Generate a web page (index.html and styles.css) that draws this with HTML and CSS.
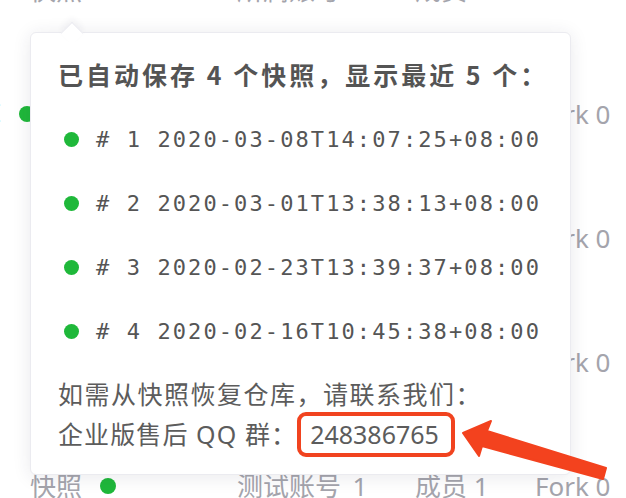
FILE: index.html
```html
<!DOCTYPE html>
<html lang="zh-CN">
<head>
<meta charset="utf-8">
<title>快照</title>
<link rel="stylesheet" href="styles.css">
</head>
<body>
<div class="page">
  <div class="table">
    <div class="row">
      <div class="c1">快照</div>
      <div class="c2">所属账号</div>
      <div class="c3">成员</div>
      <div class="c4"></div>
    </div>
    <div class="row">
      <div class="c1"><span class="link">库</span><span class="dot dot-bg"></span></div>
      <div class="c2">测试账号_1</div>
      <div class="c3">成员 1</div>
      <div class="c4">Fork 0</div>
    </div>
    <div class="row">
      <div class="c1">快照 <span class="dot dot-bg"></span></div>
      <div class="c2">测试账号_1</div>
      <div class="c3">成员 1</div>
      <div class="c4">Fork 0</div>
    </div>
    <div class="row">
      <div class="c1">快照 <span class="dot dot-bg"></span></div>
      <div class="c2">测试账号_1</div>
      <div class="c3">成员 1</div>
      <div class="c4">Fork 0</div>
    </div>
    <div class="row">
      <div class="c1">快照 <span class="dot dot-bg"></span></div>
      <div class="c2">测试账号_1</div>
      <div class="c3">成员 1</div>
      <div class="c4">Fork 0</div>
    </div>
  </div>

  <div class="popover">
    <div class="caret"></div>
    <div class="title">已自动保存 <b>4</b> 个快照，显示最近 <b>5</b> 个：</div>
    <ul class="snaps">
      <li><span class="dot"></span><span class="ts"># 1 2020-03-08T14:07:25+08:00</span></li>
      <li><span class="dot"></span><span class="ts"># 2 2020-03-01T13:38:13+08:00</span></li>
      <li><span class="dot"></span><span class="ts"># 3 2020-02-23T13:39:37+08:00</span></li>
      <li><span class="dot"></span><span class="ts"># 4 2020-02-16T10:45:38+08:00</span></li>
    </ul>
    <div class="foot">
      <div class="line">如需从快照恢复仓库，请联系我们：</div>
      <div class="line">企业版售后 QQ 群：<span class="qq">248386765</span></div>
    </div>
  </div>

  <svg class="pointer" width="626" height="498" viewBox="0 0 626 498">
    <polygon points="463,433 491,421 487,431 606,468 603,479 482,446 479,456" fill="#f3421e" stroke="#f3421e" stroke-width="2" stroke-linejoin="round"/>
  </svg>
</div>
</body>
</html>
```

FILE: styles.css
```css
* { box-sizing: border-box; }
html, body { margin: 0; padding: 0; background: #fff; }
body {
  width: 626px;
  height: 498px;
  overflow: hidden;
  font-family: "Noto Sans", "Noto Sans CJK SC", sans-serif;
}
.page {
  position: relative;
  width: 626px;
  height: 498px;
  overflow: hidden;
}
.table {
  margin-top: -72px;
  display: flex;
  flex-direction: column;
}
.row {
  height: 124px;
  display: flex;
  align-items: center;
  color: #a4a4ac;
  font-size: 26px;
  line-height: 30px;
  white-space: nowrap;
}
.c1 { width: 237px; padding-left: 30px; display: flex; align-items: center; gap: 18px; }
.c2 { width: 178px; }
.c3 { width: 120px; }
.c4 { width: 91px; }
.link { color: #4a90d9; margin-left: -55px; }
.dot {
  display: inline-block;
  width: 15px;
  height: 15px;
  border-radius: 50%;
  background: #1fb83a;
  flex: none;
}
.dot-bg { width: 16px; height: 16px; }

.popover {
  position: absolute;
  left: 30px;
  top: 32px;
  width: 541px;
  height: 443px;
  background: #fff;
  border: 1px solid #ebebf0;
  border-radius: 6px;
  box-shadow: 0 2px 18px rgba(40, 40, 70, 0.10);
  padding: 24px 20px 0 27px;
  color: #555;
}
.caret {
  position: absolute;
  left: 33px;
  top: -8px;
  width: 16px;
  height: 16px;
  background: #fff;
  border-left: 1px solid #ebebf0;
  border-top: 1px solid #ebebf0;
  transform: rotate(45deg);
  box-shadow: -3px -3px 6px rgba(40, 40, 70, 0.05);
}
.title {
  font-family: "Noto Sans CJK SC", sans-serif;
  font-size: 25px;
  line-height: 34px;
  font-weight: 700;
  letter-spacing: 3px;
  color: #545454;
  white-space: nowrap;
}
.title b { font-weight: 700; }
.snaps {
  list-style: none;
  margin: 16px 0 0;
  padding: 0 0 0 6px;
}
.snaps li {
  height: 64px;
  display: flex;
  align-items: center;
  gap: 17px;
}
.ts {
  font-family: "DejaVu Sans Mono", monospace;
  font-size: 22px;
  letter-spacing: 2.1px;
  color: #555;
  white-space: nowrap;
}
.foot {
  margin-top: 11px;
  font-family: "Noto Sans", "Noto Sans CJK SC", sans-serif;
  font-size: 25px;
  color: #5c5c5c;
}
.line {
  height: 40px;
  line-height: 40px;
  letter-spacing: 1.5px;
  white-space: nowrap;
}
.line:last-child { letter-spacing: 1.1px; }
.qq {
  display: inline-block;
  height: 45px;
  line-height: 37px;
  padding: 0 12px 0 9px;
  border: 4px solid #f1431f;
  border-radius: 9px;
  letter-spacing: 0;
  vertical-align: middle;
  margin-top: -6px;
}
.pointer {
  position: absolute;
  left: 0;
  top: 0;
}
```
